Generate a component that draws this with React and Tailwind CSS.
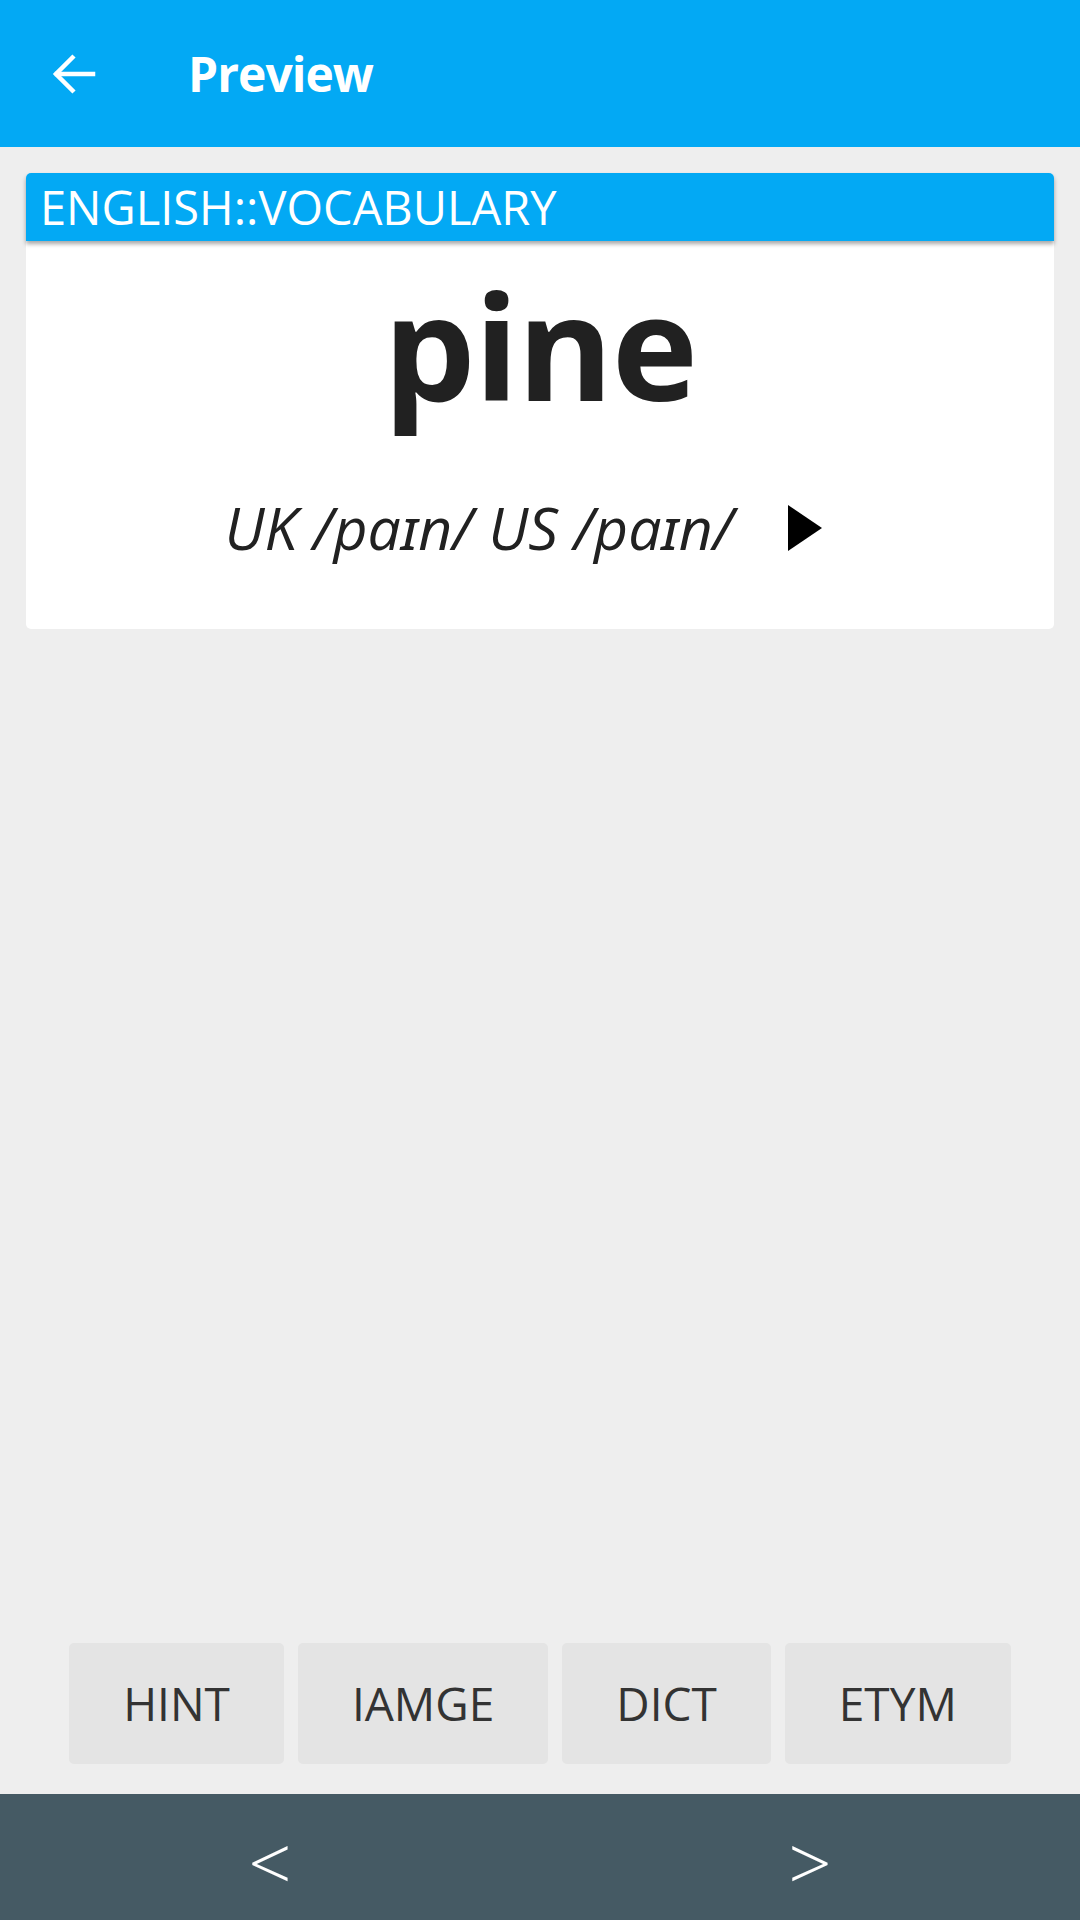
import React from "react";

export default function App() {
  const font = { fontFamily: '"Open Sans", "Noto Sans", sans-serif' };
  return (
    <div className="w-[1080px] h-[1920px] flex flex-col bg-[#eeeeee]" style={font}>
      <div className="h-[147px] shrink-0 bg-[#03a9f4] flex items-center">
        <div className="w-[148px] flex items-center pl-[52px]">
          <svg width="44" height="44" viewBox="0 0 44 44" fill="none" stroke="white" strokeWidth="4.5" strokeLinecap="square">
            <path d="M41 22H5" />
            <path d="M22 4L4 22l18 18" strokeLinecap="butt" />
          </svg>
        </div>
        <div className="text-white font-bold text-[48px] tracking-[-0.02em] pl-[40px] leading-none">Preview</div>
      </div>

      <div className="px-[26px] pt-[26px]">
        <div className="bg-white rounded-[5px] h-[456px] flex flex-col">
          <div className="relative z-10 h-[68px] shrink-0 bg-[#03a9f4] rounded-t-[5px] shadow-[0_3px_4px_rgba(0,0,0,0.35)] flex items-center pl-[14px]">
            <span className="text-white text-[47px] leading-[68px]">ENGLISH::VOCABULARY</span>
          </div>
          <div className="flex flex-col items-center">
            <div className="mt-[31px] text-[146px] leading-none font-bold text-[#212121] tracking-[-0.01em]">pine</div>
            <div className="mt-[80px] flex items-center pr-[34px]">
              <span className="italic text-[59px] leading-none text-[#212121]">UK /paɪn/ US /paɪn/</span>
              <svg className="ml-[54px]" width="34" height="46" viewBox="0 0 34 46">
                <path d="M0 0L34 23L0 46Z" fill="black" />
              </svg>
            </div>
          </div>
        </div>
      </div>

      <div className="flex-1" />

      <div className="flex justify-center gap-[14px] mb-[30px]">
        {["HINT", "IAMGE", "DICT", "ETYM"].map((t) => (
          <div key={t} className="h-[121px] px-[54px] bg-[#e4e4e4] rounded-[5px] flex items-center justify-center text-[46px] text-[#333333]">
            {t}
          </div>
        ))}
      </div>

      <div className="h-[126px] shrink-0 bg-[#455a64] flex">
        <div className="flex-1 flex items-center justify-center text-white text-[76px] font-light leading-none pt-[10px]">&lt;</div>
        <div className="flex-1 flex items-center justify-center text-white text-[76px] font-light leading-none pt-[10px]">&gt;</div>
      </div>
    </div>
  );
}
